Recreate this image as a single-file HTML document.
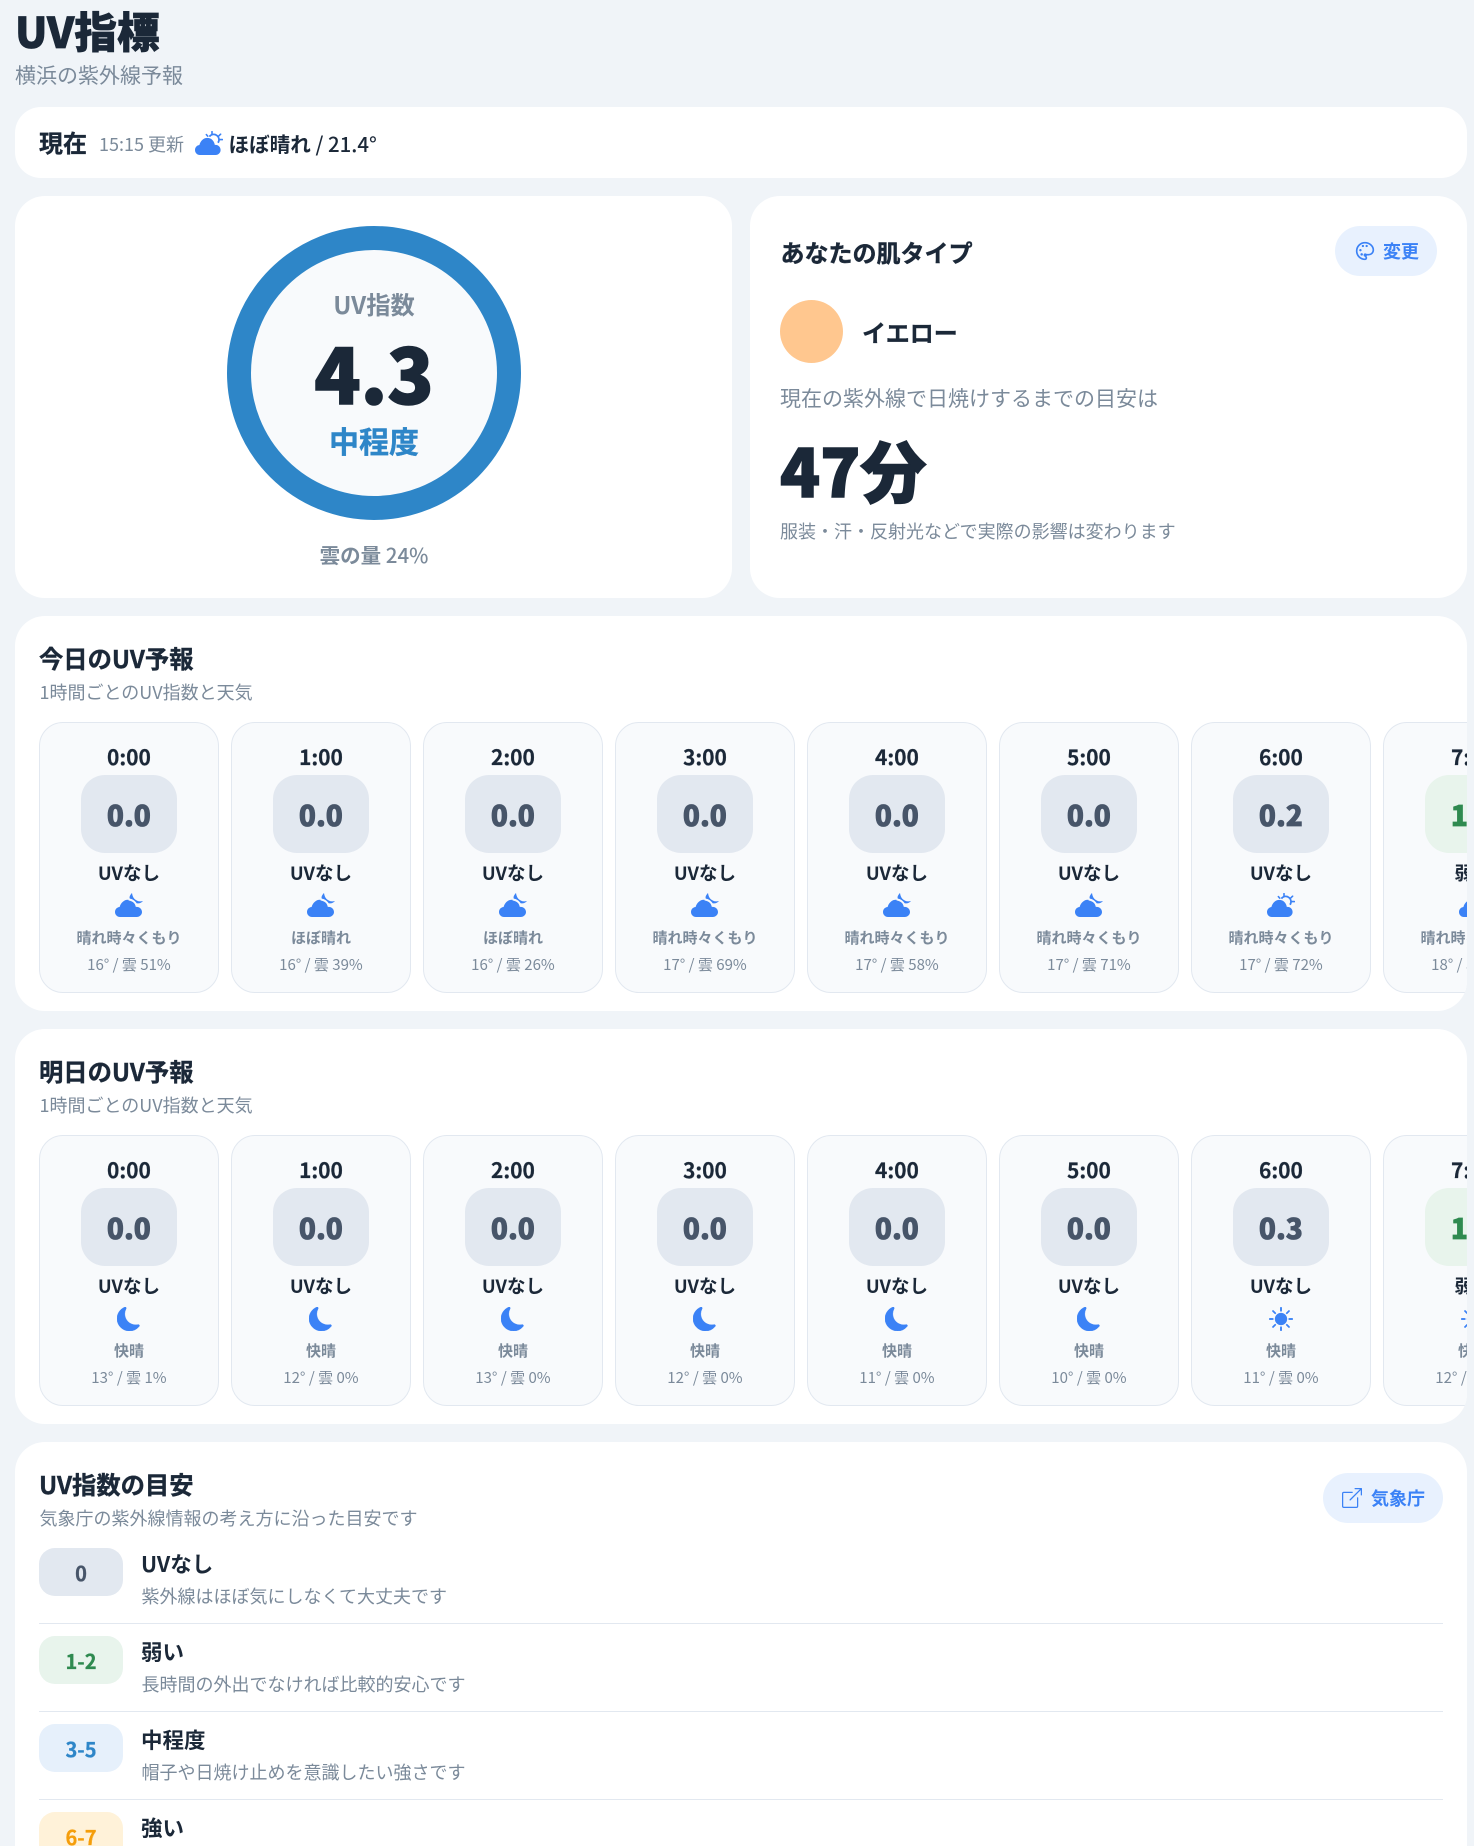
<!DOCTYPE html>
<html lang="ja"><head><meta charset="utf-8"><title>UV指標</title>
<style>
*{box-sizing:border-box;margin:0;padding:0}
html,body{width:1474px;height:1846px;overflow:hidden;background:#f0f4f8}
body{position:relative;font-family:"Noto Sans CJK JP",sans-serif;color:#1b2838}
.a{position:absolute;white-space:nowrap}
.card{position:absolute;background:#fff;border-radius:30px;overflow:hidden}
.g{color:#7b8a9a}
.sec{left:15px;width:1452px}
.h2{position:absolute;left:24px;font-size:24.3px;font-weight:700;line-height:34px;white-space:nowrap;-webkit-text-stroke:.4px #1b2838}
.sub{position:absolute;left:24.5px;font-size:18px;line-height:26px;color:#7b8a9a;white-space:nowrap}
.hc{position:absolute;top:106px;width:179.3px;height:271px;background:#f8fafc;border:1px solid #e2e8f0;border-radius:24px;text-align:center}
.hc div{position:absolute;left:0;right:0;white-space:nowrap}
.t{top:19px;font-size:21px;font-weight:700;line-height:30px;-webkit-text-stroke:.2px #1b2838}
.b{left:40.6px!important;right:auto!important;width:96px;top:52px;height:78px;border-radius:24px;background:#e2e8f0;color:#475569;font-size:28px;font-weight:900;line-height:80px;-webkit-text-stroke:.8px #475569}
.b.gr{background:#e8f4ec;color:#2f8a50;-webkit-text-stroke:.8px #2f8a50}
.u{top:137px;font-size:18.5px;font-weight:700;line-height:26px}
.l{top:204px;font-size:15px;font-weight:700;line-height:22px;color:#7b8a9a}
.m{top:231px;font-size:15px;line-height:22px;color:#7b8a9a}
.hc svg{position:absolute;left:74.6px;top:169.5px;width:28px;height:24px;fill:#3b82f6}
.hc svg.s{left:76.6px;width:24px;top:170.7px;stroke:#3b82f6;stroke-width:.25}
.btn{position:absolute;height:50px;border-radius:25px;background:#e8f1fe;color:#3b82f6;font-size:18px;font-weight:700;line-height:50px}
.btn svg{position:absolute;top:15px;width:20px;height:20px}
.bd{position:absolute;left:24px;width:84px;height:48px;border-radius:16px;text-align:center;font-size:20px;font-weight:700;line-height:50px;-webkit-text-stroke:.3px currentColor}
.rt{position:absolute;left:126px;font-size:21.5px;font-weight:700;line-height:30px;white-space:nowrap}
.rd{position:absolute;left:126.5px;font-size:18px;line-height:26px;color:#7b8a9a;white-space:nowrap}
.hr{position:absolute;left:24px;width:1404px;height:1px;background:#e2e8f0}
</style></head><body>
<svg width="0" height="0" style="position:absolute">
<defs>
<symbol id="cs" viewBox="0 0 28 24"><path d="M4.8 24C2.1 24 0 21.8 0 19C0 16.4 1.9 14.3 4.4 14C5.5 9.8 8.6 6.9 12.3 6.9C16 6.9 19 9.5 19.8 13.9H20.6C23.4 13.9 25.6 16.2 25.6 19C25.6 21.8 23.4 24 20.6 24Z"/><path d="M17 3.4V.6M11.4 3.6l1.3 1.5M25.6 3.2l-1.8 1.7M24.4 8.6h2.9" stroke="#3b82f6" stroke-width="1.6" stroke-linecap="round" fill="none"/><path d="M14.4 5.6A5.2 5.2 0 0 1 23 11.8" stroke="#3b82f6" stroke-width="1.7" fill="none"/></symbol>
<symbol id="cm" viewBox="0 0 28 24"><path d="M5 24C2.2 24 0 21.8 0 19C0 16.3 2 14.2 4.6 14C5.8 9.8 9 6.7 12.8 6.7C16.8 6.7 20 9.5 20.8 13.9H21.7C24.6 13.9 27 16.2 27 19C27 21.8 24.6 24 21.7 24Z"/><path d="M13.6 6.6C17 7.2 20.4 9.2 22 12.4" fill="none" stroke="#f8fafc" stroke-width="1.5"/><path d="M17 0C14.8 2.2 14.2 4 14.8 5.6C17.6 6 20 7.6 21.6 10.2C24 10.8 26.4 10 28 8C24.4 9 21.4 8 19.2 5.6C17.9 4 17.3 2 17 0z"/></symbol>
<symbol id="mo" viewBox="0 0 16 16"><path d="M6 .278a.768.768 0 0 1 .08.858 7.208 7.208 0 0 0-.878 3.46c0 4.021 3.278 7.277 7.318 7.277.527 0 1.04-.055 1.533-.16a.787.787 0 0 1 .81.316.733.733 0 0 1-.031.893A8.349 8.349 0 0 1 8.344 16C3.734 16 0 12.286 0 7.71 0 4.266 2.114 1.312 5.124.06A.752.752 0 0 1 6 .278z"/></symbol>
<symbol id="su" viewBox="0 0 16 16"><path d="M8 12a4 4 0 1 0 0-8 4 4 0 0 0 0 8zM8 0a.5.5 0 0 1 .5.5v2a.5.5 0 0 1-1 0v-2A.5.5 0 0 1 8 0zm0 13a.5.5 0 0 1 .5.5v2a.5.5 0 0 1-1 0v-2A.5.5 0 0 1 8 13zm8-5a.5.5 0 0 1-.5.5h-2a.5.5 0 0 1 0-1h2a.5.5 0 0 1 .5.5zM3 8a.5.5 0 0 1-.5.5h-2a.5.5 0 0 1 0-1h2A.5.5 0 0 1 3 8zm10.657-5.657a.5.5 0 0 1 0 .707l-1.414 1.415a.5.5 0 1 1-.707-.708l1.414-1.414a.5.5 0 0 1 .707 0zm-9.193 9.193a.5.5 0 0 1 0 .707L3.05 13.657a.5.5 0 0 1-.707-.707l1.414-1.414a.5.5 0 0 1 .707 0zm9.193 2.121a.5.5 0 0 1-.707 0l-1.414-1.414a.5.5 0 0 1 .707-.707l1.414 1.414a.5.5 0 0 1 0 .707zM4.464 4.465a.5.5 0 0 1-.707 0L2.343 3.05a.5.5 0 1 1 .707-.707l1.414 1.414a.5.5 0 0 1 0 .708z"/></symbol>
</defs></svg>

<div class="a" style="left:15px;top:1px;font-size:42.6px;font-weight:900;line-height:60px;-webkit-text-stroke:.7px #1b2838">UV指標</div>
<div class="a g" style="left:15px;top:60px;font-size:21px;line-height:30px">横浜の紫外線予報</div>

<div class="card" style="left:15px;top:107px;width:1452px;height:71px;border-radius:26px">
<div class="a" style="left:24px;top:18px;font-size:24px;font-weight:700;line-height:34px;-webkit-text-stroke:.3px #1b2838">現在</div>
<div class="a g" style="left:84px;top:24px;font-size:18px;line-height:26px">15:15 更新</div>
<svg style="position:absolute;left:179.5px;top:24px;width:28px;height:24px;fill:#3b82f6"><use href="#cs"/></svg>
<div class="a" style="left:213.5px;top:21px;font-size:20.6px;font-weight:700;line-height:30px">ほぼ晴れ<span style="font-size:20.4px;font-weight:500"> / 21.4°</span></div>
</div>

<div class="card" style="left:15px;top:196px;width:717px;height:402px">
<div class="a" style="left:212px;top:30px;width:294px;height:294px;border-radius:50%;border:24px solid #2e86c8;background:#f8fafc"></div>
<div class="a g" style="left:0;width:718px;text-align:center;top:91px;font-size:24.3px;font-weight:700;line-height:34px">UV指数</div>
<div class="a" style="left:0;width:718px;text-align:center;top:125px;font-size:76px;font-weight:900;line-height:100px;-webkit-text-stroke:1.6px #1b2838">4.3</div>
<div class="a" style="left:0;width:718px;text-align:center;top:222px;font-size:30px;font-weight:700;line-height:44px;color:#2e86c8;-webkit-text-stroke:.4px #2e86c8">中程度</div>
<div class="a g" style="left:0;width:718px;text-align:center;top:343px;font-size:20.5px;font-weight:700;line-height:30px">雲の量 <span style="font-weight:500">24%</span></div>
</div>

<div class="card" style="left:750px;top:196px;width:717px;height:402px">
<div class="a" style="left:30.5px;top:39px;font-size:24px;font-weight:700;line-height:34px;-webkit-text-stroke:.4px #1b2838">あなたの肌タイプ</div>
<div class="btn" style="left:585px;top:30px;width:102px;padding-left:48px">
<svg style="left:20px" viewBox="0 0 24 24" fill="none" stroke="#3b82f6" stroke-width="2"><path d="M12 2C6.5 2 2 6.5 2 12s4.5 10 10 10c.926 0 1.648-.746 1.648-1.688 0-.437-.18-.835-.437-1.125-.29-.289-.438-.652-.438-1.125a1.64 1.64 0 0 1 1.668-1.668h1.996c3.051 0 5.555-2.503 5.555-5.554C21.965 6.012 17.461 2 12 2z"/><g fill="#3b82f6" stroke="none"><circle cx="9.5" cy="6" r="1.4"/><circle cx="14" cy="6" r="1.4"/><circle cx="6.5" cy="11" r="1.4"/><circle cx="8" cy="16" r="1.5"/><circle cx="12.3" cy="16.8" r="2"/></g></svg>変更</div>
<div class="a" style="left:30px;top:104px;width:63px;height:63px;border-radius:50%;background:#ffc78f"></div>
<div class="a" style="left:112px;top:119px;font-size:24px;font-weight:700;line-height:34px;-webkit-text-stroke:.3px #1b2838">イエロー</div>
<div class="a g" style="left:30px;top:187px;font-size:21px;line-height:30px">現在の紫外線で日焼けするまでの目安は</div>
<div class="a" style="left:30px;top:223px;font-size:66px;font-weight:900;line-height:100px;-webkit-text-stroke:1.4px #1b2838">47分</div>
<div class="a g" style="left:30px;top:322px;font-size:18px;line-height:26px">服装・汗・反射光などで実際の影響は変わります</div>
</div>

<div class="card sec" style="top:616px;height:395px">
<div class="h2" style="top:25px">今日のUV予報</div>
<div class="sub" style="top:63px">1時間ごとのUV指数と天気</div>
<div class="hc" style="left:24.3px"><div class="t">0:00</div><div class="b">0.0</div><div class="u">UVなし</div><svg><use href="#cm"/></svg><div class="l">晴れ時々くもり</div><div class="m">16° / 雲 51%</div></div>
<div class="hc" style="left:216.3px"><div class="t">1:00</div><div class="b">0.0</div><div class="u">UVなし</div><svg><use href="#cm"/></svg><div class="l">ほぼ晴れ</div><div class="m">16° / 雲 39%</div></div>
<div class="hc" style="left:408.3px"><div class="t">2:00</div><div class="b">0.0</div><div class="u">UVなし</div><svg><use href="#cm"/></svg><div class="l">ほぼ晴れ</div><div class="m">16° / 雲 26%</div></div>
<div class="hc" style="left:600.3px"><div class="t">3:00</div><div class="b">0.0</div><div class="u">UVなし</div><svg><use href="#cm"/></svg><div class="l">晴れ時々くもり</div><div class="m">17° / 雲 69%</div></div>
<div class="hc" style="left:792.3px"><div class="t">4:00</div><div class="b">0.0</div><div class="u">UVなし</div><svg><use href="#cm"/></svg><div class="l">晴れ時々くもり</div><div class="m">17° / 雲 58%</div></div>
<div class="hc" style="left:984.3px"><div class="t">5:00</div><div class="b">0.0</div><div class="u">UVなし</div><svg><use href="#cm"/></svg><div class="l">晴れ時々くもり</div><div class="m">17° / 雲 71%</div></div>
<div class="hc" style="left:1176.3px"><div class="t">6:00</div><div class="b">0.2</div><div class="u">UVなし</div><svg><use href="#cs"/></svg><div class="l">晴れ時々くもり</div><div class="m">17° / 雲 72%</div></div>
<div class="hc" style="left:1368.3px"><div class="t">7:00</div><div class="b gr">1.0</div><div class="u">弱い</div><svg><use href="#cs"/></svg><div class="l">晴れ時々くもり</div><div class="m">18° / 雲 70%</div></div>
</div>

<div class="card sec" style="top:1029px;height:395px">
<div class="h2" style="top:25px">明日のUV予報</div>
<div class="sub" style="top:63px">1時間ごとのUV指数と天気</div>
<div class="hc" style="left:24.3px"><div class="t">0:00</div><div class="b">0.0</div><div class="u">UVなし</div><svg class="s"><use href="#mo"/></svg><div class="l">快晴</div><div class="m">13° / 雲 1%</div></div>
<div class="hc" style="left:216.3px"><div class="t">1:00</div><div class="b">0.0</div><div class="u">UVなし</div><svg class="s"><use href="#mo"/></svg><div class="l">快晴</div><div class="m">12° / 雲 0%</div></div>
<div class="hc" style="left:408.3px"><div class="t">2:00</div><div class="b">0.0</div><div class="u">UVなし</div><svg class="s"><use href="#mo"/></svg><div class="l">快晴</div><div class="m">13° / 雲 0%</div></div>
<div class="hc" style="left:600.3px"><div class="t">3:00</div><div class="b">0.0</div><div class="u">UVなし</div><svg class="s"><use href="#mo"/></svg><div class="l">快晴</div><div class="m">12° / 雲 0%</div></div>
<div class="hc" style="left:792.3px"><div class="t">4:00</div><div class="b">0.0</div><div class="u">UVなし</div><svg class="s"><use href="#mo"/></svg><div class="l">快晴</div><div class="m">11° / 雲 0%</div></div>
<div class="hc" style="left:984.3px"><div class="t">5:00</div><div class="b">0.0</div><div class="u">UVなし</div><svg class="s"><use href="#mo"/></svg><div class="l">快晴</div><div class="m">10° / 雲 0%</div></div>
<div class="hc" style="left:1176.3px"><div class="t">6:00</div><div class="b">0.3</div><div class="u">UVなし</div><svg class="s"><use href="#su"/></svg><div class="l">快晴</div><div class="m">11° / 雲 0%</div></div>
<div class="hc" style="left:1368.3px"><div class="t">7:00</div><div class="b gr">1.0</div><div class="u">弱い</div><svg class="s"><use href="#su"/></svg><div class="l">快晴</div><div class="m">12° / 雲 0%</div></div>
</div>

<div class="card sec" style="top:1442px;height:404px;border-radius:30px 30px 0 0">
<div class="h2" style="top:25px">UV指数の目安</div>
<div class="sub" style="top:63px">気象庁の紫外線情報の考え方に沿った目安です</div>
<div class="btn" style="left:1308px;top:31px;width:120px;padding-left:48px">
<svg style="left:19px" viewBox="0 0 16 16" fill="#3b82f6"><path d="M8.636 3.5a.5.5 0 0 0-.5-.5H1.5A1.5 1.5 0 0 0 0 4.5v10A1.5 1.5 0 0 0 1.5 16h10a1.5 1.5 0 0 0 1.5-1.5V7.864a.5.5 0 0 0-1 0V14.5a.5.5 0 0 1-.5.5h-10a.5.5 0 0 1-.5-.5v-10a.5.5 0 0 1 .5-.5h6.636a.5.5 0 0 0 .5-.5z"/><path d="M16 .5a.5.5 0 0 0-.5-.5h-5a.5.5 0 0 0 0 1h3.793L6.146 9.146a.5.5 0 1 0 .708.708L15 1.707V5.5a.5.5 0 0 0 1 0v-5z"/></svg>気象庁</div>
<div class="bd" style="top:106px;background:#e2e8f0;color:#475569">0</div>
<div class="rt" style="top:107px">UVなし</div><div class="rd" style="top:141px">紫外線はほぼ気にしなくて大丈夫です</div>
<div class="hr" style="top:181px"></div>
<div class="bd" style="top:194px;background:#e8f4ec;color:#2f8a50">1-2</div>
<div class="rt" style="top:195px">弱い</div><div class="rd" style="top:229px">長時間の外出でなければ比較的安心です</div>
<div class="hr" style="top:269px"></div>
<div class="bd" style="top:282px;background:#e6f0fb;color:#2e86c8">3-5</div>
<div class="rt" style="top:283px">中程度</div><div class="rd" style="top:317px">帽子や日焼け止めを意識したい強さです</div>
<div class="hr" style="top:357px"></div>
<div class="bd" style="top:370px;height:34px;border-radius:16px 16px 0 0;background:#fff2d9;color:#f59e0b">6-7</div>
<div class="rt" style="top:371px">強い</div>
</div>
</body></html>
